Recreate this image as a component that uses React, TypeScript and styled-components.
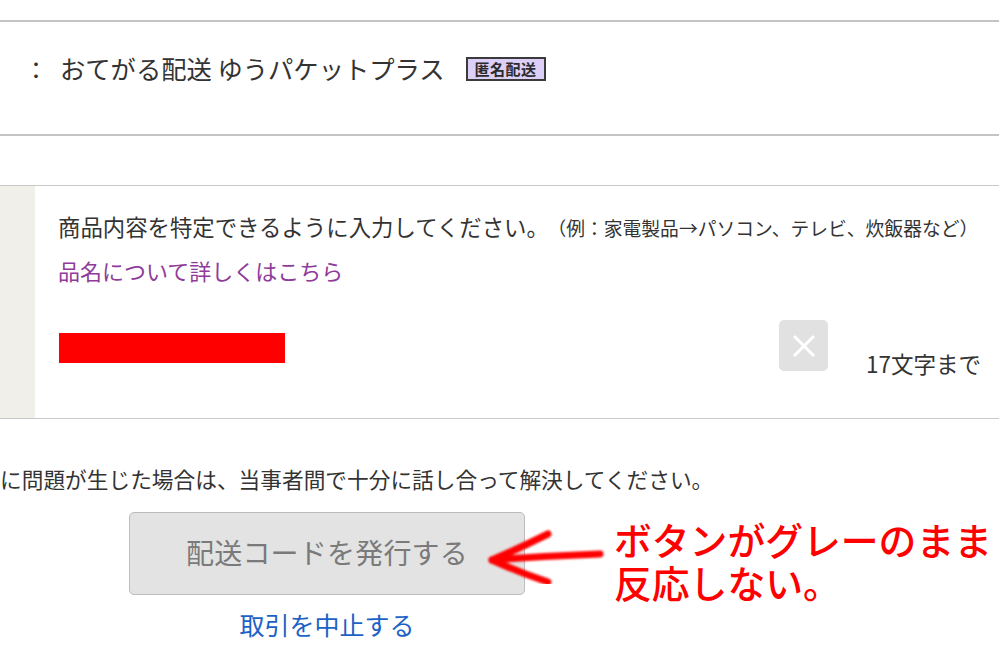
import styled, { createGlobalStyle } from "styled-components";

const GlobalStyle = createGlobalStyle`
  html, body {
    margin: 0;
    padding: 0;
    background: #fff;
  }
  body {
    width: 999px;
    height: 654px;
    overflow: hidden;
    font-family: "Noto Sans CJK JP", "Noto Sans", sans-serif;
    color: #333;
  }
`;

const Page = styled.div`
  padding-top: 20px;
`;

const InfoRow = styled.div`
  border-top: 2px solid #c4c4c4;
  border-bottom: 2px solid #c4c4c4;
  display: flex;
  align-items: center;
  padding-left: 24px;
  padding-bottom: 20px;
  height: 92px;
  font-size: 25.3px;
  color: #333;
`;

const Colon = styled.span`
  width: 24px;
  text-align: center;
  margin-right: 12px;
  font-size: 24px;
`;

const Badge = styled.span`
  margin-left: 21px;
  margin-top: 2px;
  width: 76px;
  height: 20px;
  border: 2px solid #3b3b3b;
  background: #dccff8;
  font-size: 15px;
  font-weight: 700;
  line-height: 20px;
  text-align: center;
  letter-spacing: 0.5px;
  color: #2b2b2b;
`;

const ItemSection = styled.section`
  margin-top: 49px;
  border-top: 1px solid #c9c9c9;
  border-bottom: 1px solid #c9c9c9;
  display: flex;
  height: 232px;
`;

const Sidebar = styled.div`
  width: 35px;
  background: #f0efe9;
`;

const ItemBody = styled.div`
  flex: 1;
  padding: 24px 0 0 23px;
`;

const Hint = styled.p`
  margin: 0;
  font-size: 22.4px;
  line-height: 32px;
  color: #333;
  white-space: nowrap;
`;

const HintExample = styled.span`
  margin-left: 8px;
  font-size: 18.8px;
`;

const DetailLink = styled.a`
  display: block;
  margin-top: 10px;
  font-size: 22px;
  line-height: 32px;
  color: #8f3b9a;
  text-decoration: none;
`;

const InputRow = styled.div`
  display: flex;
  align-items: flex-start;
  margin-top: 34px;
`;

const Field = styled.div`
  width: 721px;
  padding-top: 13px;
`;

const Mask = styled.div`
  width: 226px;
  height: 30px;
  margin-left: 1px;
  background: #ff0000;
`;

const ClearButton = styled.button`
  width: 49px;
  height: 51px;
  border: none;
  border-radius: 5px;
  background: #e1e1e1;
  padding: 0;
  display: flex;
  align-items: center;
  justify-content: center;
`;

const Counter = styled.span`
  margin-left: 38px;
  margin-top: 27px;
  font-size: 22.5px;
  line-height: 32px;
  color: #333;
`;

const Notice = styled.p`
  margin: 45px 0 0;
  font-size: 21.7px;
  line-height: 30px;
  color: #333;
  white-space: nowrap;
`;

const ActionArea = styled.div`
  position: relative;
  margin-top: 18px;
  display: flex;
  flex-direction: column;
  align-items: center;
  width: 396px;
  margin-left: 129px;
`;

const IssueButton = styled.button`
  width: 396px;
  height: 83px;
  border: 1.5px solid #bcbcbc;
  border-radius: 5px;
  background: #e3e3e3;
  color: #7a7a7a;
  font-family: inherit;
  font-size: 28px;
  letter-spacing: 0.2px;
  padding-bottom: 4px;
`;

const CancelLink = styled.a`
  margin-top: 14px;
  font-size: 25px;
  line-height: 30px;
  color: #1d62c6;
  text-decoration: none;
`;

const Arrow = styled.svg`
  position: absolute;
  left: 355px;
  top: 2px;
`;

const Annotation = styled.div`
  position: absolute;
  left: 485px;
  top: 5px;
  font-size: 37.8px;
  line-height: 43px;
  font-weight: 500;
  color: #f00;
  white-space: nowrap;
`;

export default function App() {
  return (
    <Page>
      <GlobalStyle />
      <InfoRow>
        <Colon>：</Colon>
        <span>おてがる配送 ゆうパケットプラス</span>
        <Badge>匿名配送</Badge>
      </InfoRow>

      <ItemSection>
        <Sidebar />
        <ItemBody>
          <Hint>
            商品内容を特定できるように入力してください。
            <HintExample>（例：家電製品→パソコン、テレビ、炊飯器など）</HintExample>
          </Hint>
          <DetailLink href="#">品名について詳しくはこちら</DetailLink>
          <InputRow>
            <Field>
              <Mask />
            </Field>
            <ClearButton aria-label="クリア">
              <svg width="24" height="24" viewBox="0 0 24 24">
                <path d="M2 2 L22 22 M22 2 L2 22" stroke="#fff" strokeWidth="3" />
              </svg>
            </ClearButton>
            <Counter>17文字まで</Counter>
          </InputRow>
        </ItemBody>
      </ItemSection>

      <Notice>に問題が生じた場合は、当事者間で十分に話し合って解決してください。</Notice>

      <ActionArea>
        <IssueButton>配送コードを発行する</IssueButton>
        <CancelLink href="#">取引を中止する</CancelLink>
        <Arrow width="124" height="70" viewBox="0 0 124 70">
          <defs>
            <filter id="soft" x="-10%" y="-20%" width="120%" height="140%">
              <feGaussianBlur stdDeviation="0.9" />
            </filter>
          </defs>
          <g
            fill="none"
            stroke="#f00"
            strokeWidth="7"
            strokeLinecap="round"
            strokeLinejoin="round"
            filter="url(#soft)"
          >
            <path d="M116 40 Q62 42 8 46" />
            <path d="M64 20 Q36 34 8 46 Q34 58 64 68" />
          </g>
        </Arrow>
        <Annotation>
          ボタンがグレーのまま
          <br />
          反応しない。
        </Annotation>
      </ActionArea>
    </Page>
  );
}
